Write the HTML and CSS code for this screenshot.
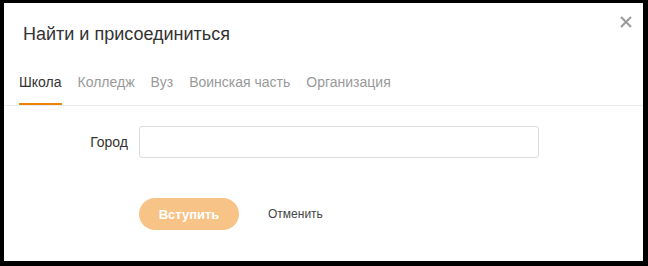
FILE: index.html
```html
<!DOCTYPE html>
<html lang="ru">
<head>
<meta charset="utf-8">
<link rel="stylesheet" href="styles.css">
</head>
<body>
<div class="dialog">
  <button class="close" aria-label="Закрыть">
    <svg width="12" height="12" viewBox="0 0 12 12"><path d="M1 1L11 11M11 1L1 11" stroke="#9a9a9a" stroke-width="2" fill="none"/></svg>
  </button>
  <h1 class="title">Найти и присоединиться</h1>
  <div class="tabs">
    <span class="tab active">Школа</span>
    <span class="tab">Колледж</span>
    <span class="tab">Вуз</span>
    <span class="tab">Воинская часть</span>
    <span class="tab">Организация</span>
  </div>
  <div class="form-row">
    <label class="label">Город</label>
    <div class="input"></div>
  </div>
  <div class="actions">
    <button class="btn-primary">Вступить</button>
    <button class="btn-link">Отменить</button>
  </div>
</div>
</body>
</html>
```
FILE: styles.css
```css
html, body {
  margin: 0;
  padding: 0;
  background: #000;
}
body {
  width: 648px;
  height: 266px;
  padding: 3px 0 0 4px;
  box-sizing: border-box;
  font-family: "Liberation Sans", Arial, sans-serif;
}
.dialog {
  position: relative;
  width: 639px;
  height: 258px;
  background: #fff;
  box-sizing: border-box;
  padding-top: 19px;
}
.close {
  position: absolute;
  top: 13px;
  left: 616px;
  width: 12px;
  height: 12px;
  padding: 0;
  border: 0;
  background: none;
  display: block;
}
.close svg { display: block; }
.title {
  margin: 0 0 0 19px;
  font-size: 18px;
  line-height: 24px;
  font-weight: normal;
  color: #333;
}
.tabs {
  display: flex;
  gap: 16px;
  margin-top: 26px;
  padding-left: 15px;
  border-bottom: 1px solid #ebebeb;
}
.tab {
  font-size: 14px;
  line-height: 20px;
  color: #999;
  padding-bottom: 11px;
  border-bottom: 2px solid transparent;
}
.tab.active {
  color: #333;
  border-bottom-color: #ee8208;
}
.form-row {
  display: flex;
  align-items: center;
  margin-top: 20px;
}
.label {
  width: 124px;
  text-align: right;
  font-size: 14px;
  color: #333;
  margin-right: 11px;
}
.input {
  width: 400px;
  height: 32px;
  box-sizing: border-box;
  border: 1px solid #dcdcdc;
  border-radius: 3px;
}
.actions {
  display: flex;
  align-items: center;
  margin-top: 40px;
  padding-left: 135px;
}
.btn-primary {
  width: 100px;
  height: 32px;
  border: 0;
  border-radius: 16px;
  background: #f8c386;
  color: #fff;
  font-family: "Liberation Sans", Arial, sans-serif;
  font-size: 13px;
  font-weight: bold;
  padding: 0;
}
.btn-link {
  margin-left: 29px;
  border: 0;
  background: none;
  padding: 0;
  font-family: "Liberation Sans", Arial, sans-serif;
  font-size: 12px;
  color: #444;
}
```
